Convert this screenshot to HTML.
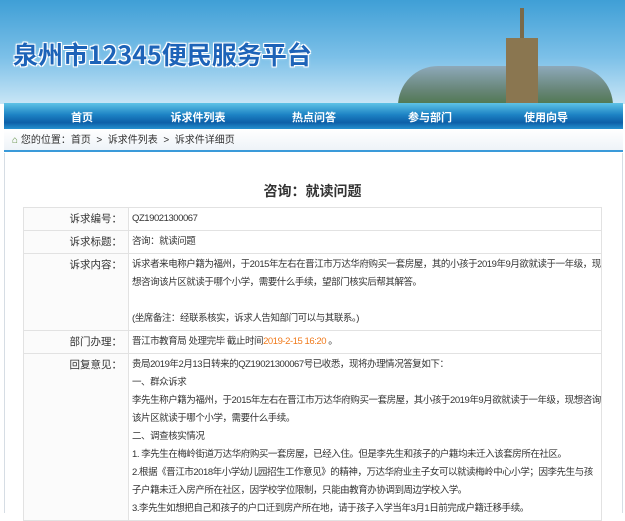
<!DOCTYPE html>
<html><head><meta charset="utf-8"><style>
*{margin:0;padding:0;box-sizing:border-box}
body{width:625px;height:509px;overflow:hidden;background:#fff;font-family:"Liberation Sans","Noto Sans CJK SC",sans-serif;font-size:11px;color:#333;position:relative}
#banner{position:absolute;left:0;top:0;width:625px;height:104px;background:linear-gradient(180deg,#3f9fd6 0%,#7cc0e8 55%,#c9e6f6 100%);overflow:hidden}
#banner .t{position:absolute;left:13px;top:36px;font-size:25px;font-weight:bold;color:#1d63b8;text-shadow:-1px -1px 0 #fff,1px -1px 0 #fff,-1px 1px 0 #fff,1px 1px 0 #fff,0 0 3px #fff;font-family:"Noto Sans CJK SC",sans-serif}
#city{position:absolute;left:398px;top:66px;width:215px;height:40px;background:linear-gradient(180deg,#8ea6b5,#5f7c6a 60%,#3f6a3a);border-radius:40px 40px 0 0;opacity:.9}
#nav{position:absolute;left:4px;top:103px;width:619px;height:26px;background:linear-gradient(180deg,#5ec3e6 0%,#1d83c4 45%,#0d5fa8 75%,#2690cf 100%)}
#nav span{position:absolute;top:6px;color:#fff;font-weight:bold;font-size:11px;transform:translateX(-50%)}
#crumb{position:absolute;left:4px;top:129px;width:619px;height:23px;background:linear-gradient(#fff,#eef3f8);border-bottom:2px solid #3a9ad9;font-size:10px;line-height:23px;padding-left:8px;color:#333}
#box{position:absolute;left:4px;top:153px;width:619px;height:360px;border-left:1px solid #d6dde4;border-right:1px solid #d6dde4}
h1{position:absolute;left:0;width:625px;top:181px;text-align:center;font-size:14px;font-weight:bold;color:#333}
table{position:absolute;left:23px;top:207px;width:579px;border-collapse:collapse;border:1px solid #cfcfcf}
td{border:1px solid #e2e2e2;vertical-align:top;font-size:9.5px;letter-spacing:-0.45px;line-height:18px;padding:2px 0 2px 3px}
td.l{width:105px;text-align:right;background:#fbfbfb;padding-right:6px;letter-spacing:0;font-size:10.5px}
.o{color:#f07a1c}
</style></head><body>
<div id="banner">
<div class="t">泉州市12345便民服务平台</div>
<div id="city"></div>
<div style="position:absolute;left:520px;top:8px;width:4px;height:40px;background:#7a6a4a"></div>
<div style="position:absolute;left:506px;top:38px;width:32px;height:66px;background:#8a7650"></div>
</div>
<div id="nav"><span style="left:78px">首页</span><span style="left:194px">诉求件列表</span><span style="left:310px">热点问答</span><span style="left:426px">参与部门</span><span style="left:542px">使用向导</span></div>
<div id="crumb"><span style="color:#5a8a3a">⌂</span> 您的位置：首页 &nbsp;&gt;&nbsp; 诉求件列表 &nbsp;&gt;&nbsp; 诉求件详细页</div>
<div id="box"></div>
<h1>咨询：就读问题</h1>
<table>
<tr style="height:22px"><td class="l">诉求编号：</td><td>QZ19021300067</td></tr>
<tr style="height:22px"><td class="l">诉求标题：</td><td>咨询：就读问题</td></tr>
<tr style="height:75px"><td class="l">诉求内容：</td><td>诉求者来电称户籍为福州，于2015年左右在晋江市万达华府购买一套房屋，其的小孩于2019年9月欲就读于一年级，现想咨询该片区就读于哪个小学，需要什么手续，望部门核实后帮其解答。<br><br>(坐席备注：经联系核实，诉求人告知部门可以与其联系。)</td></tr>
<tr style="height:21px"><td class="l">部门办理：</td><td>晋江市教育局 处理完毕 截止时间<span class="o">2019-2-15 16:20</span> 。</td></tr>
<tr><td class="l">回复意见：</td><td>贵局2019年2月13日转来的QZ19021300067号已收悉，现将办理情况答复如下：<br>一、群众诉求<br>李先生称户籍为福州，于2015年左右在晋江市万达华府购买一套房屋，其小孩于2019年9月欲就读于一年级，现想咨询该片区就读于哪个小学，需要什么手续。<br>二、调查核实情况<br>1. 李先生在梅岭街道万达华府购买一套房屋，已经入住。但是李先生和孩子的户籍均未迁入该套房所在社区。<br>2.根据《晋江市2018年小学幼儿园招生工作意见》的精神，万达华府业主子女可以就读梅岭中心小学；因李先生与孩子户籍未迁入房产所在社区，因学校学位限制，只能由教育办协调到周边学校入学。<br>3.李先生如想把自己和孩子的户口迁到房产所在地，请于孩子入学当年3月1日前完成户籍迁移手续。</td></tr>
</table>
</body></html>
